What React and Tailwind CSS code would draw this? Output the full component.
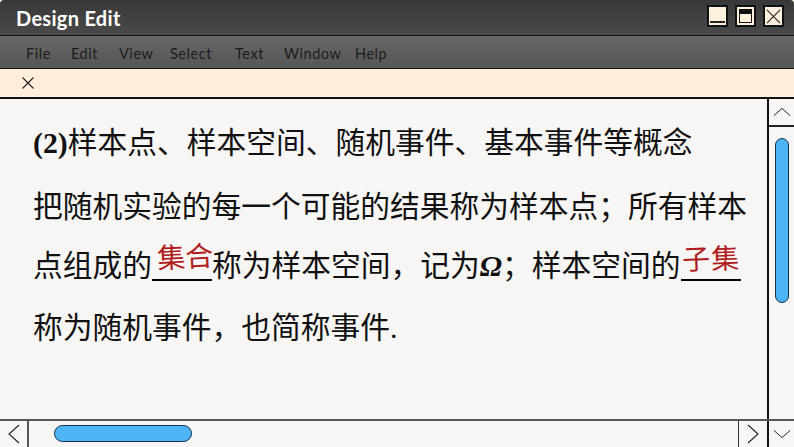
import React from 'react';

const menuItems = [
  { label: 'File', className: 'ml-[26px] w-[45px]' },
  { label: 'Edit', className: 'w-[48px]' },
  { label: 'View', className: 'w-[51px]' },
  { label: 'Select', className: 'w-[65px]' },
  { label: 'Text', className: 'w-[49px]' },
  { label: 'Window', className: 'w-[71px]' },
  { label: 'Help', className: 'w-[40px]' },
];

const Chevron = ({ points, className }) => (
  <svg viewBox="0 0 20 20" className={className} fill="none" stroke="#222" strokeWidth="1.1">
    <polyline points={points} />
  </svg>
);

const WindowButton = ({ children }) => (
  <div className="w-[21px] h-[22px] bg-[#fdf1de] border-2 border-[#111] flex items-center justify-center">
    {children}
  </div>
);

const Blank = ({ text, className }) => (
  <span className="relative inline-block w-[60px] h-[32px] mb-[3px] border-b-2 border-black">
    <span
      className={`absolute whitespace-nowrap text-[#b01c20] text-[28px] leading-none ${className}`}
      style={{ fontFamily: '"Noto Sans CJK SC", sans-serif' }}
    >
      {text}
    </span>
  </span>
);

const App = () => {
  return (
    <div className="w-[794px] h-[447px] overflow-hidden flex flex-col bg-[#8b9440] rounded-t-[4px]">
      <div className="h-[36px] shrink-0 flex items-center pl-[16px] pr-[10px] bg-gradient-to-b from-[#383838] to-[#4a4a4a] border-b border-[#111] rounded-t-[4px]">
        <span className="text-white font-bold text-[20px] tracking-[0.3px] mt-[1px]" style={{ fontFamily: 'Lato, sans-serif' }}>
          Design Edit
        </span>
        <div className="ml-auto flex gap-[7px] mb-[3px]">
          <WindowButton>
            <div className="w-[15px] h-[2px] bg-[#222] mt-[12px]" />
          </WindowButton>
          <WindowButton>
            <div className="w-[13px] h-[14px] border border-[#111] border-t-[5px]" />
          </WindowButton>
          <WindowButton>
            <svg viewBox="0 0 16 16" className="w-[15px] h-[15px]" fill="none" stroke="#222" strokeWidth="1.2">
              <path d="M1 1 L15 15 M15 1 L1 15" />
            </svg>
          </WindowButton>
        </div>
      </div>

      <div className="h-[33px] shrink-0 flex items-center pt-[3px] bg-gradient-to-b from-[#686868] to-[#555555] border-b border-[#111] text-[#1c1c1c] text-[14.5px] tracking-[0.55px]" style={{ fontFamily: 'Lato, sans-serif' }}>
        {menuItems.map((item) => (
          <span key={item.label} className={item.className}>{item.label}</span>
        ))}
      </div>

      <div className="h-[30px] shrink-0 flex items-center pl-[21px] bg-[#ffeedb] border-b-2 border-[#111]">
        <svg viewBox="0 0 14 14" className="w-[14px] h-[14px]" fill="none" stroke="#222" strokeWidth="1.1">
          <path d="M1.5 1.5 L12.5 12.5 M12.5 1.5 L1.5 12.5" />
        </svg>
      </div>

      <div className="flex-1 min-h-0 flex bg-[#f7f6f4]">
        <div
          className="flex-1 pl-[33px] pt-[26px] text-[29.75px] leading-[36px] text-[#111] whitespace-nowrap"
          style={{ fontFamily: '"Liberation Serif", "Noto Sans CJK SC", serif' }}
        >
          <div><b>(2)</b>样本点、样本空间、随机事件、基本事件等概念</div>
          <div className="mt-[28px]">把随机实验的每一个可能的结果称为样本点；所有样本</div>
          <div className="mt-[23px] flex items-end h-[36px]">
            <span>点组成的</span>
            <Blank text="集合" className="left-[5px] top-[-8px] -rotate-3" />
            <span>称为样本空间，记为<b><i>Ω</i></b>；样本空间的</span>
            <Blank text="子集" className="left-[1px] top-[-6px] -rotate-2 tracking-[1px]" />
          </div>
          <div className="mt-[26px]">称为随机事件，也简称事件.</div>
        </div>
        <div className="w-[27px] shrink-0 border-l-2 border-[#111] flex flex-col">
          <div className="h-[28px] border-b-2 border-[#222] flex items-center justify-center">
            <Chevron points="1,14 10,6 19,14" className="w-[18px] h-[18px]" />
          </div>
          <div className="mt-[11px] ml-[6px] w-[14px] h-[165px] rounded-full bg-[#4db5f5] border border-[#14304a]" />
        </div>
      </div>

      <div className="h-[28px] shrink-0 flex bg-[#f7f6f4] border-t-2 border-[#555]">
        <div className="w-[29px] border-r-2 border-[#555] flex items-center justify-center">
          <Chevron points="15,1 5,10 15,19" className="w-[20px] h-[20px]" />
        </div>
        <div className="flex-1 pl-[25px] pt-[4px]">
          <div className="w-[138px] h-[17px] rounded-full bg-[#4db5f5] border border-[#14304a]" />
        </div>
        <div className="w-[29px] border-l border-[#333] flex items-center justify-center">
          <Chevron points="5,1 15,10 5,19" className="w-[20px] h-[20px]" />
        </div>
        <div className="w-[27px] border-l-2 border-[#111] flex items-center justify-center">
          <Chevron points="1,6 10,14 19,6" className="w-[18px] h-[18px]" />
        </div>
      </div>
    </div>
  );
};

export default App;
